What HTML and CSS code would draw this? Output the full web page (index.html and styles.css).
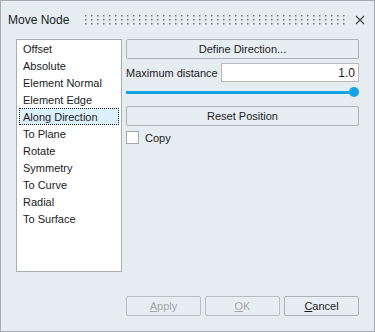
FILE: index.html
```html
<!DOCTYPE html>
<html lang="en">
<head>
    <meta charset="UTF-8">
    <meta name="viewport" content="width=device-width, initial-scale=1.0">
    <title>Move Node</title>
    <link rel="stylesheet" href="styles.css">
</head>
<body>

<div class="dialog">
    <div class="title-bar">
        <span class="title">Move Node</span>
        <svg class="grip" width="260" height="11">
            <defs>
                <pattern id="dots" width="6" height="4" patternUnits="userSpaceOnUse">
                    <rect x="0" y="0" width="1.5" height="1.5" fill="#70777b"></rect>
                </pattern>
            </defs>
            <rect width="260" height="11" fill="url(#dots)"></rect>
        </svg>
        <svg class="close" width="10" height="10" viewBox="0 0 10 10">
            <path d="M1 1 L9 9 M9 1 L1 9" stroke="#444" stroke-width="1.1" fill="none"></path>
        </svg>
    </div>

    <div class="content">
        <ul class="mode-list">
            <li class="mode-item">Offset</li>
            <li class="mode-item">Absolute</li>
            <li class="mode-item">Element Normal</li>
            <li class="mode-item">Element Edge</li>
            <li class="mode-item selected">Along Direction</li>
            <li class="mode-item">To Plane</li>
            <li class="mode-item">Rotate</li>
            <li class="mode-item">Symmetry</li>
            <li class="mode-item">To Curve</li>
            <li class="mode-item">Radial</li>
            <li class="mode-item">To Surface</li>
        </ul>

        <div class="options">
            <button class="btn wide">Define Direction...</button>
            <div class="field-row">
                <label class="field-label" for="maxDist">Maximum distance</label>
                <input class="field-input" id="maxDist" type="text" value="1.0">
            </div>
            <div class="slider">
                <div class="slider-track"></div>
                <div class="slider-thumb"></div>
            </div>
            <button class="btn wide">Reset Position</button>
            <label class="check-row">
                <span class="check-box"></span>
                <span>Copy</span>
            </label>
        </div>
    </div>

    <div class="footer">
        <button class="btn action" disabled><u>A</u>pply</button>
        <button class="btn action" disabled><u>O</u>K</button>
        <button class="btn action"><u>C</u>ancel</button>
    </div>
</div>

</body>
</html>
```

FILE: styles.css
```css
body {
    margin: 0;
    padding: 0;
    font-family: 'Liberation Sans', Arial, sans-serif;
    font-size: 11px;
    color: #1b1b24;
}

.dialog {
    width: 375px;
    height: 332px;
    box-sizing: border-box;
    border: 1px solid #a4abaf;
    background-color: #e5edf1;
    display: flex;
    flex-direction: column;
}

.title-bar {
    height: 37px;
    display: flex;
    align-items: center;
    padding-left: 7px;
    box-sizing: border-box;
    flex-shrink: 0;
}

.title {
    font-size: 12px;
    width: 77px;
}

.grip {
    display: block;
    margin-top: 1px;
}

.close {
    display: block;
    margin-left: 10px;
}

.content {
    display: flex;
    gap: 4px;
    padding: 1px 15px 0 15px;
}

.mode-list {
    list-style: none;
    margin: 0;
    padding: 0 2px;
    width: 106px;
    height: 233px;
    box-sizing: border-box;
    background-color: white;
    border: 1px solid #a8aeb2;
}

.mode-item {
    height: 17px;
    line-height: 17px;
    padding-left: 3px;
    white-space: nowrap;
    border: 1px solid transparent;
    box-sizing: border-box;
}

.mode-item.selected {
    background-color: #dcf0fb;
    border: 1px dotted #222;
}

.options {
    width: 233px;
    display: flex;
    flex-direction: column;
}

.btn {
    font-family: inherit;
    font-size: 11px;
    color: #1b1b24;
    height: 20px;
    padding: 0;
    background-color: #e7eef2;
    border: 1px solid #adb2b5;
    border-radius: 2px;
}

.btn.wide {
    width: 100%;
}

.btn:disabled {
    color: #a2a6a9;
    border-color: #b8bdc0;
}

.field-row {
    display: flex;
    align-items: center;
    justify-content: space-between;
    margin-top: 4px;
}

.field-input {
    width: 138px;
    height: 19px;
    box-sizing: border-box;
    border: 1px solid #b5babd;
    font-family: inherit;
    font-size: 12px;
    text-align: right;
    padding: 0 3px;
    color: #1b1b24;
    outline: none;
}

.slider {
    position: relative;
    height: 14px;
    margin: 3px 0 7px 0;
}

.slider-track {
    position: absolute;
    left: 0;
    right: 4px;
    top: 6px;
    height: 3px;
    background-color: #14a3e4;
}

.slider-thumb {
    position: absolute;
    right: 0;
    top: 2px;
    width: 10px;
    height: 10px;
    border-radius: 50%;
    background-color: #14a3e4;
}

.check-row {
    display: flex;
    align-items: center;
    gap: 6px;
    margin-top: 5px;
    font-size: 11px;
}

.check-box {
    width: 13px;
    height: 13px;
    box-sizing: border-box;
    background-color: white;
    border: 1px solid #a4a9ac;
}

.footer {
    margin-top: auto;
    display: flex;
    justify-content: flex-end;
    gap: 4px;
    padding: 0 15px 15px 0;
}

.btn.action {
    width: 75px;
}
```
